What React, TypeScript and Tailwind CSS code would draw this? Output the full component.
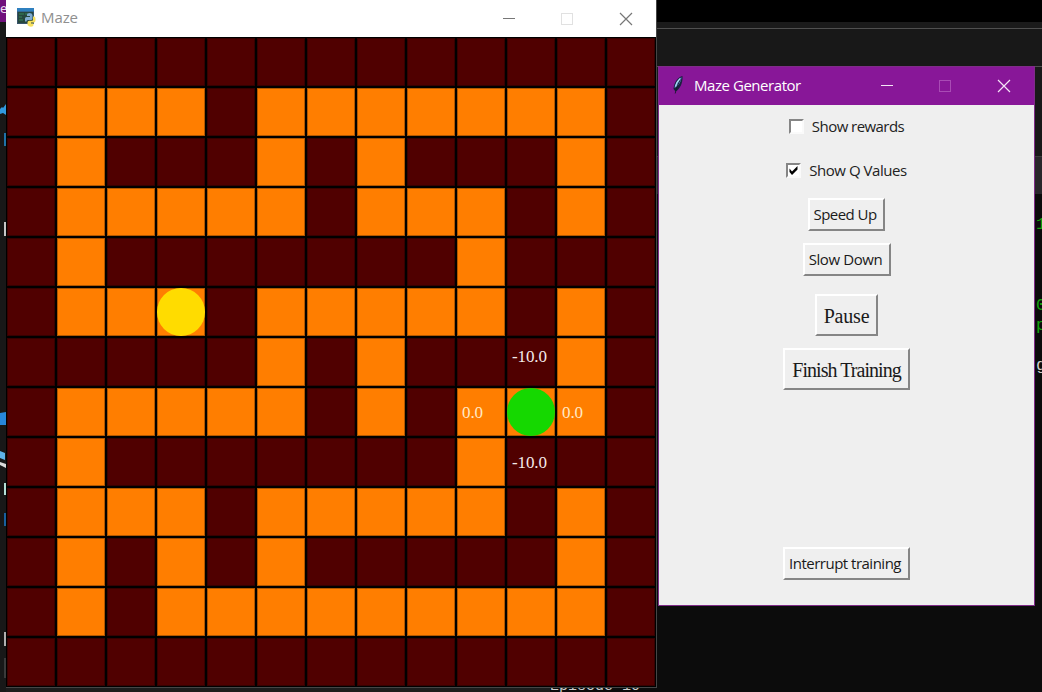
import type { ReactNode } from "react";

const MAZE = [
  "0000000000000",
  "0111011111110",
  "0100010100010",
  "0111110111010",
  "0100000001000",
  "0111011111010",
  "0000010100010",
  "0111110101110",
  "0100000001000",
  "0111011111010",
  "0101010000010",
  "0101111111110",
  "0000000000000",
];

const VALUES: Record<string, string> = {
  "6-10": "-10.0",
  "7-9": "0.0",
  "7-11": "0.0",
  "8-10": "-10.0",
};

function Cell({ open, id }: { open: boolean; id: string }) {
  const value = VALUES[id];
  const low = id[0] !== "6";
  return (
    <div className={`inset-ring inset-ring-black/30 ${open ? "bg-[#ff7e00]" : "bg-[#500000]"}`}>
      {id === "5-3" && <div className="size-12 rounded-full bg-[#ffdc00]" />}
      {id === "7-10" && <div className="size-12 rounded-full bg-[#15d800]" />}
      {value && (
        <div
          className={`pl-[5px] font-['Liberation_Serif',serif] text-[17px] leading-5 tracking-[-0.1px] whitespace-nowrap ${low ? "pt-[15px]" : "pt-[9px]"} ${open ? "text-[#ffe9c4]" : "text-[#f4eaea]"}`}
        >
          {value}
        </div>
      )}
    </div>
  );
}

function PythonIcon() {
  return (
    <svg width="19" height="19" viewBox="0 0 19 19">
      <rect x="0" y="0" width="17" height="16" fill="#38546a" />
      <rect x="0" y="0" width="17" height="3.5" fill="#2f80bf" />
      <rect x="1" y="4" width="15" height="11" fill="#27473f" />
      <path d="M2 6h5M2 9h3M8 6h3M2 12h4" stroke="#35845a" strokeWidth="1" />
      <path d="M8 13.500V10.500q0-1.500 1.500-1.500H13V8h-3V6.500Q10 5 12.500 5T15.500 7v3.500q0 1.500-1.500 1.500h-3q-1.500 0-1.500 1.500z" fill="#7fabd0" />
      <path d="M16 8.500h1q1.500 0 1.500 3t-1.500 3h-3v1h2.500V17q0 1.700-2.500 1.700T10.500 17v-2.500q0-1.700 1.700-1.700H15q1 0 1-1.300z" fill="#f7e05c" />
    </svg>
  );
}

function FeatherIcon() {
  return (
    <svg width="12" height="20" viewBox="0 0 12 20">
      <path d="M10.500 1C6 2 2 7 1.500 14l2 2.500C8 14 11 8 10.500 1z" fill="#19213f" />
      <path d="M9.500 2.200C6 4 3 8 2.500 13c3.500-1.500 6.500-5.500 7-10.800z" fill="#5b92cb" />
      <path d="M8.500 4.500C6.500 8 4.500 12 3.200 18.500" stroke="#17182c" strokeWidth="0.900" fill="none" />
      <path d="M8 3.600C5.500 6 4 9 3.500 11.500" stroke="#b9e2f4" strokeWidth="1.200" fill="none" />
    </svg>
  );
}

function Controls({ main, dim }: { main: string; dim: string }) {
  return (
    <svg width="131" height="14" viewBox="0 0 131 14" fill="none">
      <path d="M0 6.500h12" stroke={main} />
      <rect x="58.500" y="1.500" width="11" height="11" stroke={dim} />
      <path d="M117 1l12 12M129 1l-12 12" stroke={main} strokeWidth="1.200" />
    </svg>
  );
}

function TkButton({ className, children }: { className: string; children: ReactNode }) {
  return (
    <button
      className={`flex shrink-0 items-center justify-center border-2 border-t-white border-r-[#858585] border-b-[#858585] border-l-white bg-[#efefef] whitespace-nowrap text-[#1a1a1a] ${className}`}
    >
      {children}
    </button>
  );
}

function TkCheck({ checked, className, children }: { checked?: boolean; className: string; children: ReactNode }) {
  return (
    <label className={`flex h-5 items-center gap-2 whitespace-nowrap ${className}`}>
      <span className="flex size-[15px] shrink-0 border-2 border-t-[#858585] border-r-[#fafafa] border-b-[#fafafa] border-l-[#858585] bg-white">
        {checked && (
          <svg width="11" height="11" viewBox="0 0 11 11">
            <path d="M1.500 3.500L4 6.500 9.500 1v3.500L4 10 1.500 7z" fill="#000" />
          </svg>
        )}
      </span>
      <span>{children}</span>
    </label>
  );
}

function Desktop() {
  return (
    <div className="flex h-full">
      <div className="flex w-[6px] shrink-0 flex-col overflow-hidden bg-[#181818] text-[13px]">
        <div className="h-[22px] shrink-0 bg-[#70107c] font-['Noto_Sans',sans-serif] leading-[17px] text-[#eadcf0]">e</div>
        <svg width="6" height="670" viewBox="0 22 6 670">
          <path d="M0 109l2-2 1 1 3-4v11l-3-2-3 1z" fill="#3199df" />
          <path d="M4 133h2v13h-2z" fill="#1f72a8" />
          <path d="M4 222h2v14h-2z" fill="#c6c6c6" />
          <path d="M0 413l6-1v13H0z" fill="#2786da" />
          <path d="M0 451l5 2v7l-5-2z" fill="#5eb2e8" />
          <path d="M0 462l6 2v4l-6-3z" fill="#d9d9d9" />
          <path d="M4 483h2v12h-2z" fill="#b4dfd6" />
          <path d="M4 513h2v13h-2z" fill="#185f9e" />
          <path d="M4 632h2v14h-2z" fill="#b0b0b0" />
          <path d="M4 658h2v20h-2z" fill="#3a3a3a" />
        </svg>
      </div>
      <div className="flex grow flex-col">
        <div className="h-[22px] shrink-0 bg-black" />
        <div className="h-[7px] shrink-0 border-b border-[#505050] bg-[#1b1b1b]" />
        <div className="h-[38px] shrink-0 border-b border-[#505050] bg-[#181818]" />
        <div className="h-[89px] shrink-0 bg-[#191919]" />
        <div className="h-[38px] shrink-0 border-t border-[#3c3c3c] bg-[#29272b]" />
        <div className="flex grow flex-col items-end overflow-hidden bg-[#0c0c0c] font-['Liberation_Mono',monospace] text-[17px] leading-5">
          <div className="mt-[21px] w-[6px] overflow-hidden text-[#13a10e]">1</div>
          <div className="mt-[61px] w-[6px] overflow-hidden text-[#13a10e]">0</div>
          <div className="w-[6px] overflow-hidden text-[#13a10e]">p</div>
          <div className="mt-5 w-[6px] overflow-hidden text-[#cccccc]">g</div>
        </div>
        <div className="flex h-[17px] shrink-0 overflow-hidden bg-[#0c0c0c]">
          <div className="w-[544px] bg-[#1c1c1c]" />
          <div className="pt-[2px] font-['Liberation_Mono',monospace] text-[15px] leading-5 text-[#cccccc]">Episode 10</div>
        </div>
      </div>
    </div>
  );
}

export default function App() {
  return (
    <div className="relative h-[692px] w-[1042px] overflow-hidden bg-[#0c0c0c]">
      <Desktop />

      <section className="absolute top-0 left-[6px] flex h-[688px] w-[651px] flex-col border-r border-b border-[#454545] bg-black">
        <header className="flex h-[37px] shrink-0 items-center justify-between bg-white pr-[22px] pl-[11px]">
          <div className="flex items-center gap-[5px] pb-[3px]">
            <PythonIcon />
            <span className="font-['Open_Sans',sans-serif] text-[15px] leading-5 tracking-[-0.1px] text-[#8f8f8f]">Maze</span>
          </div>
          <Controls main="#777777" dim="#e1e1e1" />
        </header>
        <div className="grid h-[650px] w-[650px] grid-cols-13 grid-rows-13 gap-[2px] bg-black p-px">
          {MAZE.map((row, r) =>
            row.split("").map((c, i) => <Cell key={`${r}-${i}`} id={`${r}-${i}`} open={c === "1"} />)
          )}
        </div>
      </section>

      <section className="absolute top-[66px] left-[658px] flex h-[540px] w-[377px] flex-col border border-[#7f2c88] bg-[#efefef] font-['Open_Sans',sans-serif] text-[15px] leading-5 text-[#222222]">
        <header className="flex h-[38px] shrink-0 items-center justify-between bg-[#881798] pr-[22px] pl-[13px] text-white">
          <div className="flex items-center gap-[10px] pb-[2px]">
            <FeatherIcon />
            <span className="tracking-[-0.45px]">Maze Generator</span>
          </div>
          <Controls main="#f4e6f6" dim="#a94bb5" />
        </header>
        <div className="flex grow flex-col items-center">
          <TkCheck className="mt-[11px] tracking-[-0.55px]">Show rewards</TkCheck>
          <TkCheck checked className="mt-6 tracking-[-0.45px]">Show Q Values</TkCheck>
          <TkButton className="mt-[18px] h-[33px] w-[77px] pr-[3px] pb-[2px] tracking-[-0.55px]">Speed Up</TkButton>
          <TkButton className="mt-3 h-[33px] w-[88px] pr-[2px] pb-[2px] tracking-[-0.4px]">Slow Down</TkButton>
          <TkButton className="mt-[18px] h-[42px] w-[63px] pt-[2px] font-['Liberation_Serif',serif] text-[20px] tracking-[-0.2px]">Pause</TkButton>
          <TkButton className="mt-3 h-[42px] w-[127px] pt-[2px] font-['Liberation_Serif',serif] text-[20px] tracking-[-0.95px]">Finish Training</TkButton>
          <TkButton className="mt-[157px] h-[33px] w-[127px] pr-[3px] pb-[2px] tracking-[-0.5px]">Interrupt training</TkButton>
        </div>
      </section>
    </div>
  );
}
